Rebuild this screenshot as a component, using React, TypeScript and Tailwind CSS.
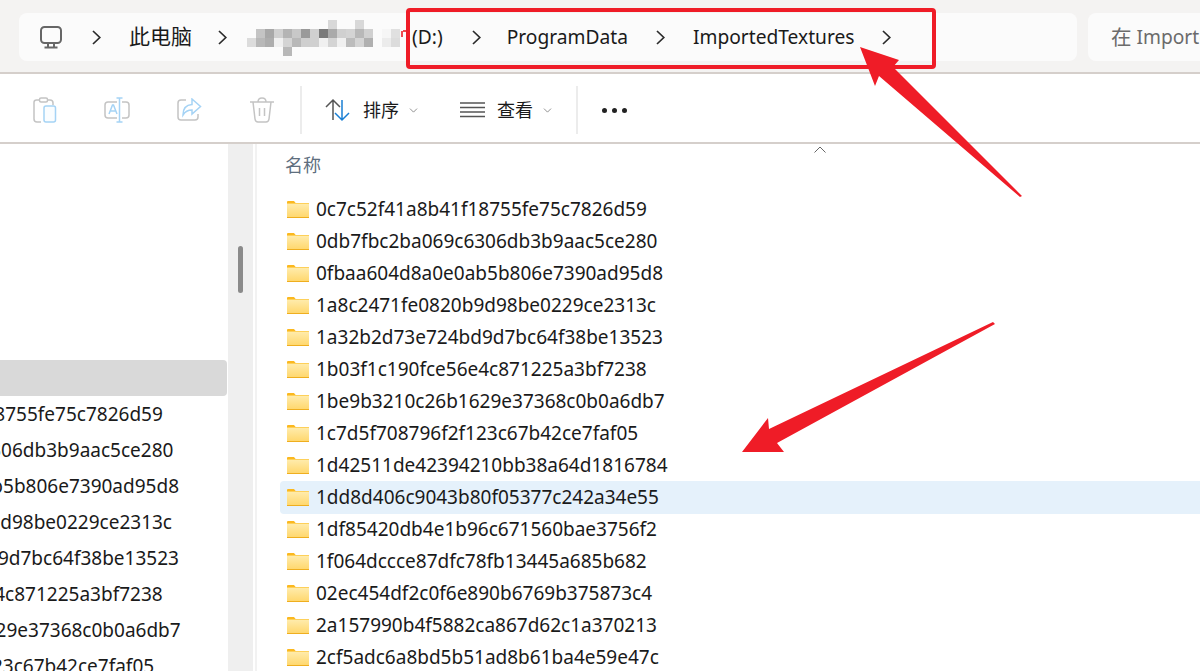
import { ChevronDown } from "lucide-react";

const folders = [
  "0c7c52f41a8b41f18755fe75c7826d59",
  "0db7fbc2ba069c6306db3b9aac5ce280",
  "0fbaa604d8a0e0ab5b806e7390ad95d8",
  "1a8c2471fe0820b9d98be0229ce2313c",
  "1a32b2d73e724bd9d7bc64f38be13523",
  "1b03f1c190fce56e4c871225a3bf7238",
  "1be9b3210c26b1629e37368c0b0a6db7",
  "1c7d5f708796f2f123c67b42ce7faf05",
  "1d42511de42394210bb38a64d1816784",
  "1dd8d406c9043b80f05377c242a34e55",
  "1df85420db4e1b96c671560bae3756f2",
  "1f064dccce87dfc78fb13445a685b682",
  "02ec454df2c0f6e890b6769b375873c4",
  "2a157990b4f5882ca867d62c1a370213",
  "2cf5adc6a8bd5b51ad8b61ba4e59e47c",
];

// blurred part of the path: [column, row, grey]
const mosaic: [number, number, string][] = [
  [9, 0, "#d8d8d8"], [12, 0, "#d8d8d8"],
  [1, 1, "#c4c4c4"], [2, 1, "#a8a8a8"], [3, 1, "#d0d0d0"], [4, 1, "#b4b4b4"], [5, 1, "#c8c8c8"],
  [6, 1, "#9a9a9a"], [7, 1, "#d0d0d0"], [8, 1, "#7a7a7a"], [9, 1, "#aaaaaa"], [10, 1, "#d0d0d0"],
  [11, 1, "#d4d4d4"], [12, 1, "#b8b8b8"], [13, 1, "#d0d0d0"], [15, 1, "#f6f6f6"], [16, 1, "#e0e0e0"],
  [0, 2, "#dcdcdc"], [1, 2, "#b8b8b8"], [2, 2, "#adadad"], [3, 2, "#f0f0f0"], [4, 2, "#d4d4d4"],
  [5, 2, "#b8b8b8"], [6, 2, "#cfcfcf"], [7, 2, "#d0d0d0"], [8, 2, "#f0f0f0"], [9, 2, "#d4d4d4"],
  [10, 2, "#f0f0f0"], [11, 2, "#bcbcbc"], [12, 2, "#d4d4d4"], [13, 2, "#b0b0b0"], [15, 2, "#ececec"],
  [16, 2, "#dcdcdc"],
  [4, 3, "#b8b8b8"],
];

const Crumb = ({ className }: { className: string }) => (
  <svg width="9" height="15" viewBox="0 0 9 15" fill="none" stroke="#2b2b2b" strokeWidth="1.7" className={`shrink-0 ${className}`}>
    <path d="M1 1l6.800 6.500L1 14" />
  </svg>
);

const FolderIcon = () => (
  <svg width="22" height="17" viewBox="0 0 22 17" className="shrink-0">
    <defs>
      <linearGradient id="folderBody" x1="0" y1="0" x2="0" y2="1">
        <stop offset="0" stopColor="#ffedb0" />
        <stop offset="1" stopColor="#ffd66a" />
      </linearGradient>
    </defs>
    <path d="M0 1Q0 0 1 0h6l2 2.500H0z" fill="#fbb81f" />
    <rect x="0" y="2" width="22" height="15" fill="url(#folderBody)" />
    <rect x="0" y="2" width="22" height="1" fill="#fdd05a" />
    <rect x="0" y="16" width="22" height="1" fill="#efae1f" />
  </svg>
);

const Separator = () => <div className="h-12 w-0.5 shrink-0 bg-[#ececec]" />;

export default function App() {
  return (
    <div className="relative h-[671px] w-[1200px] overflow-hidden bg-white font-['Noto_Sans','Noto_Sans_CJK_SC',sans-serif] text-[19px] text-[#1a1a1a]">
      {/* address bar */}
      <div className="flex h-[74px] gap-[11px] border-b-2 border-[#d5cfcb] bg-[#f4f3f2] pl-[19px] pt-[13px] text-[19.2px]">
        <div className="flex h-12 w-[1058px] shrink-0 items-center rounded-lg bg-[#fbfbfb]">
          <svg width="24" height="24" viewBox="0 0 24 24" fill="none" stroke="#666" strokeWidth="2" className="ml-[20px] shrink-0">
            <rect x="2" y="2" width="20" height="16" rx="3.5" />
            <path d="M9 18v4M15 18v4M5.500 22.500h13" />
          </svg>
          <Crumb className="ml-[29px]" />
          <span className="ml-[28px] whitespace-nowrap text-[21px]">此电脑</span>
          <Crumb className="ml-[26px]" />
          <svg width="164" height="36" viewBox="0 0 164 36" className="ml-[20px] mt-[2px] shrink-0">
            {mosaic.map(([col, row, fill]) => (
              <rect key={`${col}-${row}`} x={col * 9} y={row * 9} width="9" height="9" fill={fill} />
            ))}
            <path d="M154 11h2v-1h4v2h-4v5h-2z" fill="#ef4a50" />
          </svg>
          <span className="ml-px mt-px whitespace-nowrap">(D:)</span>
          <Crumb className="ml-[29px]" />
          <span className="ml-[26px] mt-px whitespace-nowrap">ProgramData</span>
          <Crumb className="ml-[28px]" />
          <span className="ml-[28px] mt-px whitespace-nowrap">ImportedTextures</span>
          <Crumb className="ml-[27px]" />
        </div>
        <div className="flex h-12 flex-1 items-center whitespace-nowrap rounded-l-lg bg-[#fbfbfb] pl-[23px] text-[#6b6b6b]">
          <span className="text-[20.5px]">在</span>&nbsp;ImportedTextures 中搜索
        </div>
      </div>

      {/* toolbar */}
      <div className="flex h-[70px] items-center border-b-2 border-[#d5cfcb] pt-[4px] text-[18px]">
        <svg width="24" height="26" viewBox="0 0 24 26" fill="none" strokeWidth="1.5" className="ml-[33px] shrink-0">
          <path d="M7 3H3.500Q1 3 1 5.500V22q0 3 3 3h4M15 3h2q3 0 3 3v2" stroke="#c4c4c4" />
          <rect x="6.500" y="1" width="8" height="4" rx="1.500" stroke="#c4c4c4" />
          <rect x="11" y="9" width="11.500" height="16" rx="2" stroke="#a5d3f5" fill="#fafdff" />
        </svg>
        <svg width="26" height="26" viewBox="0 0 26 26" fill="none" strokeWidth="1.5" className="ml-[47px] shrink-0">
          <path d="M13 5H4Q1 5 1 8v10q0 3 3 3h9M18 5h4q3 0 3 3v10q0 3-3 3h-4" stroke="#c4c4c4" />
          <path d="M15.500 1v24M12.500 1h6M12.500 25h6M5 17l3.500-9h1L13 17M6.200 14h6" stroke="#a5d3f5" />
        </svg>
        <svg width="25" height="24" viewBox="0 0 25 24" fill="none" strokeWidth="1.5" className="ml-[47px] shrink-0">
          <path d="M9 2H4Q1 2 1 5v14q0 3 3 3h14q3 0 3-3v-3" stroke="#c4c4c4" />
          <path d="M15 1l8.500 7.500L15 16v-4q-6 0-9 5q0-10 9-10.500z" stroke="#a5d3f5" />
        </svg>
        <svg width="24" height="26" viewBox="0 0 24 26" fill="none" stroke="#c4c4c4" strokeWidth="1.5" className="ml-[48px] shrink-0">
          <path d="M0 5h24M8 5q0-4 4-4t4 4M3 5l2 17q.4 3 3 3h8q2.600 0 3-3l2-17M9.500 11v8M14.500 11v8" />
        </svg>
        <div className="ml-[26px]">
          <Separator />
        </div>
        <svg width="26" height="24" viewBox="0 0 26 24" fill="none" strokeWidth="1.5" className="ml-[23px] shrink-0">
          <path d="M8 22V2M1 9l7-7 7 7" stroke="#555" />
          <path d="M17 2v20M10 15l7 7 7-7" stroke="#1a7fd4" />
        </svg>
        <span className="ml-[12px] whitespace-nowrap">排序</span>
        <ChevronDown size={13} strokeWidth={1.5} className="ml-[8px] shrink-0 text-[#777]" />
        <svg width="25" height="16" viewBox="0 0 25 16" fill="none" stroke="#555" strokeWidth="1.500" className="ml-[40px] shrink-0">
          <path d="M0 1h25M0 5.500h25M0 10h25M0 14.500h25" />
        </svg>
        <span className="ml-[12px] whitespace-nowrap">查看</span>
        <ChevronDown size={13} strokeWidth={1.5} className="ml-[8px] shrink-0 text-[#777]" />
        <div className="ml-[22px]">
          <Separator />
        </div>
        <div className="ml-[24px] flex gap-[5px]">
          <div className="size-[5px] rounded-full bg-[#222]" />
          <div className="size-[5px] rounded-full bg-[#222]" />
          <div className="size-[5px] rounded-full bg-[#222]" />
        </div>
      </div>

      <div className="flex h-[527px]">
        {/* nav pane */}
        <div className="w-[228px] shrink-0 overflow-hidden pt-[216px]">
          <div className="h-9 w-[227px] rounded-r bg-[#d9d9d9]" />
          {folders.slice(0, 8).map((name) => (
            <div key={name} className="-ml-[168px] flex h-9 items-center whitespace-nowrap">
              {name}
            </div>
          ))}
        </div>
        <div className="w-[25px] shrink-0 bg-[#efefef] pl-[10px] pt-[102px]">
          <div className="h-[47px] w-[5px] rounded-full bg-[#8a8a8a]" />
        </div>
        <div className="ml-[2px] w-0.5 shrink-0 bg-[#f2f2f2]" />

        {/* file list */}
        <div className="relative min-w-0 flex-1 pl-[23px]">
          <svg width="12" height="7" viewBox="0 0 12 7" fill="none" stroke="#666" className="absolute left-[557px] top-[2px]">
            <path d="M.5 6.500L6 1l5.500 5.500" />
          </svg>
          <div className="flex h-[49px] items-start pl-[5px] pt-[8px] text-[18px] text-[#5e6e7e]">名称</div>
          {folders.map((name, i) => (
            <div
              key={name}
              className={
                i === 9
                  ? "-mb-px flex h-[33px] items-center gap-[7px] rounded-l bg-[#e5f1fb] pb-px pl-[7px]"
                  : "flex h-8 items-center gap-[7px] pl-[7px]"
              }
            >
              <FolderIcon />
              <span className="whitespace-nowrap">{name}</span>
            </div>
          ))}
        </div>
      </div>

      {/* red annotations drawn on top of the screenshot */}
      <div className="absolute left-[406px] top-[8px] h-[61px] w-[530px] rounded-sm border-4 border-[#ef1c27]" />
      <svg width="1200" height="671" viewBox="0 0 1200 671" className="pointer-events-none absolute inset-0">
        <polygon points="860,47 899,60 893,67 1022,196 1020,197 879,76 875,86" fill="#ef1c27" />
        <polygon points="993,322 995,324 777,443 784,452 742,452 768,418 769,429" fill="#ef1c27" />
      </svg>
    </div>
  );
}
